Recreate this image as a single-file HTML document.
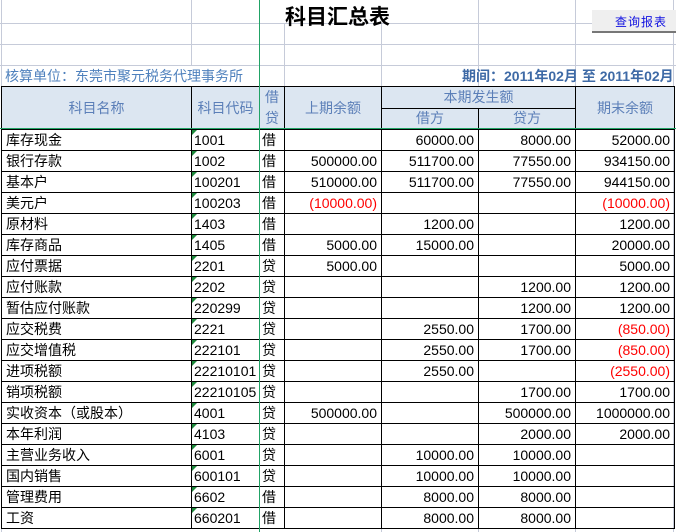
<!DOCTYPE html>
<html><head><meta charset="utf-8"><style>
*{margin:0;padding:0;box-sizing:border-box}
body{width:676px;height:532px;overflow:hidden;background:#fff;position:relative;font-family:"Liberation Sans","Noto Sans CJK SC",sans-serif;}
.g{position:absolute;background:#c6cbd9}
.t{position:absolute;font-size:14px;white-space:nowrap;color:#000;}
table{position:absolute;left:1px;top:86px;border-collapse:collapse;table-layout:fixed;width:673px;font-size:14px;font-family:"Liberation Sans","Noto Sans CJK SC",sans-serif;}
td{border:1px solid #000;height:21px;padding:0;text-indent:4px;white-space:nowrap;overflow:hidden;line-height:19px}
td.r{text-align:right;text-indent:0}
td.r::after{content:"";display:inline-block;width:4px}
td.c{text-indent:2px;position:relative}
td.c::before{content:"";position:absolute;left:0;top:0;border-top:5px solid #1e8a3c;border-right:5px solid transparent}
td.d{text-indent:2px}
.h td{background:#dce6f1;color:#5b7fb8;text-align:center;text-indent:0;border-color:#000}
.red{color:#f00}
</style></head><body>
<div class="g" style="left:0;top:23px;width:676px;height:1px"></div>
<div class="g" style="left:0;top:44px;width:676px;height:1px"></div>
<div class="g" style="left:0;top:65px;width:676px;height:1px"></div>
<div class="g" style="left:191px;top:0;width:1px;height:65px"></div>
<div class="g" style="left:284px;top:23px;width:1px;height:63px"></div>
<div class="g" style="left:381px;top:0;width:1px;height:86px"></div>
<div class="g" style="left:478px;top:0;width:1px;height:86px"></div>
<div class="g" style="left:575px;top:0;width:1px;height:86px"></div>
<div class="g" style="left:673px;top:0;width:1px;height:532px"></div>
<div class="g" style="left:1px;top:0;width:1px;height:532px"></div>
<div class="g" style="left:381px;top:527px;width:1px;height:5px"></div>
<div class="g" style="left:478px;top:527px;width:1px;height:5px"></div>
<div class="g" style="left:575px;top:527px;width:1px;height:5px"></div>
<div style="position:absolute;left:280px;top:0;width:115px;height:23px;background:#fff"></div>
<div class="t" style="left:285px;top:1px;font-size:21px;font-weight:bold">科目汇总表</div>
<div style="position:absolute;left:592px;top:10px;width:84px;height:23px;background:#efefef;border-bottom:2px solid #777;"></div>
<div class="t" style="left:615px;top:13px;font-size:12px;color:#1010e0;letter-spacing:1px">查询报表</div>
<div class="t" style="left:5px;top:66px;color:#4f81bd">核算单位：东莞市聚元税务代理事务所</div>
<div class="t" style="left:462px;top:66px;color:#3e6aa6;font-weight:bold">期间：2011年02月 至 2011年02月</div>
<table>
<colgroup><col style="width:190px"><col style="width:68px"><col style="width:25px"><col style="width:97px"><col style="width:97px"><col style="width:97px"><col style="width:99px"></colgroup>
<tr class="h"><td rowspan="2">科目名称</td><td rowspan="2">科目代码</td><td rowspan="2" style="white-space:normal;line-height:21px">借贷</td><td rowspan="2">上期余额</td><td colspan="2">本期发生额</td><td rowspan="2">期末余额</td></tr>
<tr class="h"><td>借方</td><td>贷方</td></tr>
<tr><td>库存现金</td><td class="c">1001</td><td class="d">借</td><td class="r"></td><td class="r">60000.00</td><td class="r">8000.00</td><td class="r">52000.00</td></tr>
<tr><td>银行存款</td><td class="c">1002</td><td class="d">借</td><td class="r">500000.00</td><td class="r">511700.00</td><td class="r">77550.00</td><td class="r">934150.00</td></tr>
<tr><td>基本户</td><td class="c">100201</td><td class="d">借</td><td class="r">510000.00</td><td class="r">511700.00</td><td class="r">77550.00</td><td class="r">944150.00</td></tr>
<tr><td>美元户</td><td class="c">100203</td><td class="d">借</td><td class="r red">(10000.00)</td><td class="r"></td><td class="r"></td><td class="r red">(10000.00)</td></tr>
<tr><td>原材料</td><td class="c">1403</td><td class="d">借</td><td class="r"></td><td class="r">1200.00</td><td class="r"></td><td class="r">1200.00</td></tr>
<tr><td>库存商品</td><td class="c">1405</td><td class="d">借</td><td class="r">5000.00</td><td class="r">15000.00</td><td class="r"></td><td class="r">20000.00</td></tr>
<tr><td>应付票据</td><td class="c">2201</td><td class="d">贷</td><td class="r">5000.00</td><td class="r"></td><td class="r"></td><td class="r">5000.00</td></tr>
<tr><td>应付账款</td><td class="c">2202</td><td class="d">贷</td><td class="r"></td><td class="r"></td><td class="r">1200.00</td><td class="r">1200.00</td></tr>
<tr><td>暂估应付账款</td><td class="c">220299</td><td class="d">贷</td><td class="r"></td><td class="r"></td><td class="r">1200.00</td><td class="r">1200.00</td></tr>
<tr><td>应交税费</td><td class="c">2221</td><td class="d">贷</td><td class="r"></td><td class="r">2550.00</td><td class="r">1700.00</td><td class="r red">(850.00)</td></tr>
<tr><td>应交增值税</td><td class="c">222101</td><td class="d">贷</td><td class="r"></td><td class="r">2550.00</td><td class="r">1700.00</td><td class="r red">(850.00)</td></tr>
<tr><td>进项税额</td><td class="c">22210101</td><td class="d">贷</td><td class="r"></td><td class="r">2550.00</td><td class="r"></td><td class="r red">(2550.00)</td></tr>
<tr><td>销项税额</td><td class="c">22210105</td><td class="d">贷</td><td class="r"></td><td class="r"></td><td class="r">1700.00</td><td class="r">1700.00</td></tr>
<tr><td>实收资本（或股本）</td><td class="c">4001</td><td class="d">贷</td><td class="r">500000.00</td><td class="r"></td><td class="r">500000.00</td><td class="r">1000000.00</td></tr>
<tr><td>本年利润</td><td class="c">4103</td><td class="d">贷</td><td class="r"></td><td class="r"></td><td class="r">2000.00</td><td class="r">2000.00</td></tr>
<tr><td>主营业务收入</td><td class="c">6001</td><td class="d">贷</td><td class="r"></td><td class="r">10000.00</td><td class="r">10000.00</td><td class="r"></td></tr>
<tr><td>国内销售</td><td class="c">600101</td><td class="d">贷</td><td class="r"></td><td class="r">10000.00</td><td class="r">10000.00</td><td class="r"></td></tr>
<tr><td>管理费用</td><td class="c">6602</td><td class="d">借</td><td class="r"></td><td class="r">8000.00</td><td class="r">8000.00</td><td class="r"></td></tr>
<tr><td>工资</td><td class="c">660201</td><td class="d">借</td><td class="r"></td><td class="r">8000.00</td><td class="r">8000.00</td><td class="r"></td></tr>
</table>
<div style="position:absolute;left:259px;top:0;width:1px;height:532px;background:#21a366"></div>
<div style="position:absolute;left:0;top:128px;width:676px;height:1px;background:#21a366"></div>
</body></html>
